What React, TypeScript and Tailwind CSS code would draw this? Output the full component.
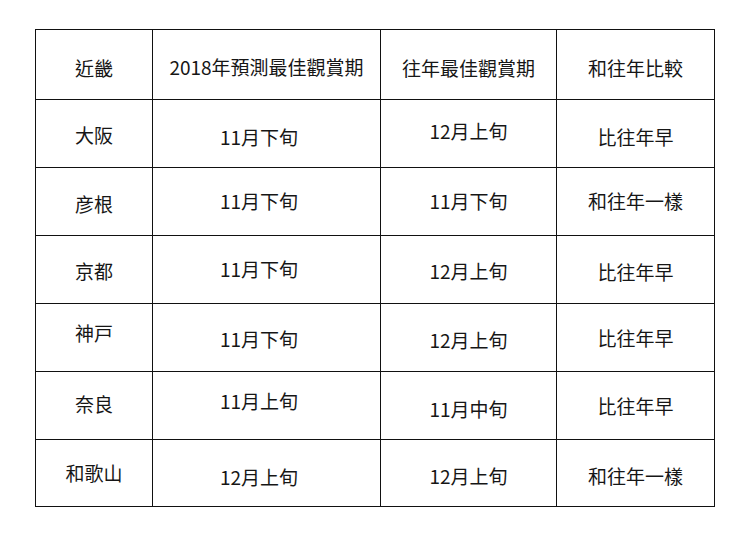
const rows: { cells: string[]; dy: number[] }[] = [
  { cells: ['近畿', '2018年預測最佳觀賞期', '往年最佳觀賞期', '和往年比較'], dy: [4, 3, 4, 4] },
  { cells: ['大阪', '11月下旬', '12月上旬', '比往年早'], dy: [2, 4, -2, 4] },
  { cells: ['彦根', '11月下旬', '11月下旬', '和往年一樣'], dy: [3, 0, 0, 0] },
  { cells: ['京都', '11月下旬', '12月上旬', '比往年早'], dy: [2, 0, 2, 3] },
  { cells: ['神戸', '11月下旬', '12月上旬', '比往年早'], dy: [-4, 2, 3, 1] },
  { cells: ['奈良', '11月上旬', '11月中旬', '比往年早'], dy: [-1, -4, 4, 1] },
  { cells: ['和歌山', '12月上旬', '12月上旬', '和往年一樣'], dy: [0, 4, 3, 3] },
];

// padding classes by vertical offset (shift of text centre, in px)
const shift: Record<number, string> = {
  [-4]: 'pb-[8px]',
  [-2]: 'pb-[4px]',
  [-1]: 'pb-[2px]',
  0: '',
  1: 'pt-[2px]',
  2: 'pt-[4px]',
  3: 'pt-[6px]',
  4: 'pt-[8px]',
};

export default function App() {
  return (
    <div
      className="w-[750px] h-[536px] bg-white pt-[29px] pl-[35px]"
      style={{ fontFamily: '"Noto Sans CJK TC", "Noto Sans", sans-serif' }}
    >
      <div className="grid grid-cols-[117px_228px_176px_158px] grid-rows-[70px_68px_68px_68px_68px_68px_67px] w-fit border-l border-t border-[#111] text-[19px] text-[#161616]">
        {rows.map((row, r) =>
          row.cells.map((text, c) => (
            <div
              key={`${r}-${c}`}
              className={`flex items-center justify-center border-r border-b border-[#111] whitespace-nowrap ${shift[row.dy[c]]} ${
                c === 1 && r > 0 ? 'pr-[15px]' : ''
              }`}
            >
              {text}
            </div>
          ))
        )}
      </div>
    </div>
  );
}
